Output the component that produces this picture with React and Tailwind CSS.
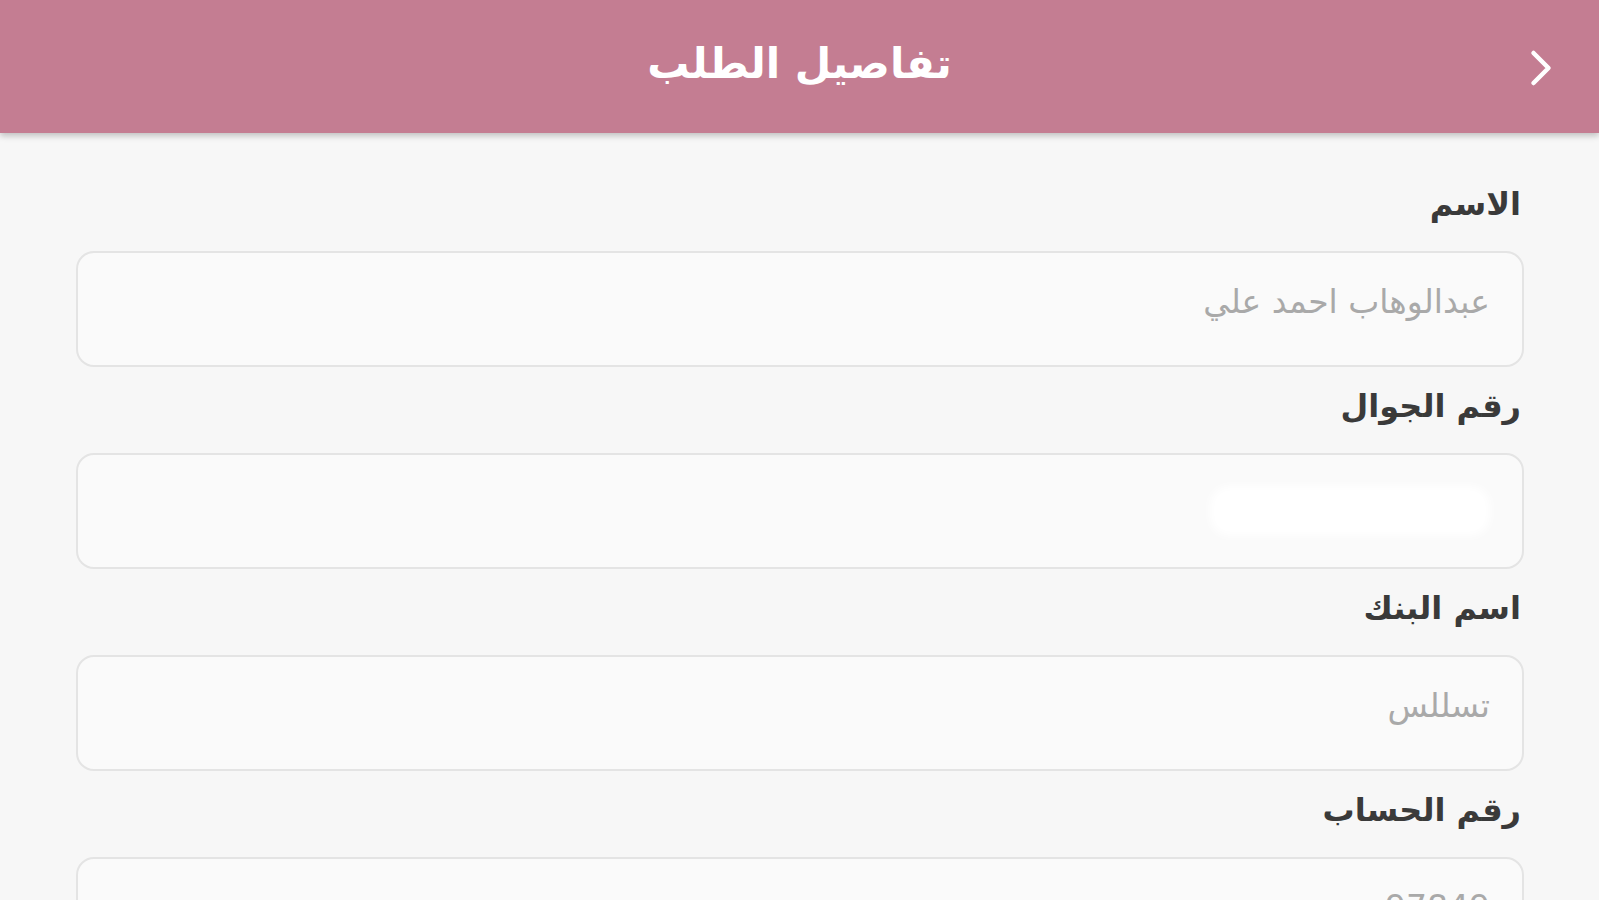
import { ChevronRight } from "lucide-react";

const fields = [
  { label: "الاسم", value: "عبدالوهاب احمد علي" },
  { label: "رقم الجوال", value: null },
  { label: "اسم البنك", value: "تسللس" },
  { label: "رقم الحساب", value: "97849" },
];

function Field({ label, value }) {
  return (
    <div>
      <p className="mt-[19px] mb-[27px] pr-[3px] text-[32px] leading-[40px] font-bold text-[#3a3a3a]">
        {label}
      </p>
      <div className="flex h-[116px] items-center rounded-[18px] border-2 border-[#e4e4e4] bg-[#fafafa] pr-[32px] pl-6 pb-[14px]">
        {value ? (
          <span className="text-[33px] text-[#a9a9a9]">{value}</span>
        ) : (
          <span className="mt-[14px] h-[50px] w-[280px] rounded-[20px] bg-white blur-[4px]" />
        )}
      </div>
    </div>
  );
}

export default function App() {
  return (
    <div
      dir="rtl"
      className="h-[900px] overflow-hidden bg-[#f7f7f7]"
      style={{ fontFamily: '"DejaVu Sans", "Noto Sans", sans-serif' }}
    >
      <header className="relative z-10 flex h-[133px] items-center justify-center bg-[#c47d92] pb-[6px] shadow-[0_3px_6px_rgba(0,0,0,0.22)]">
        <ChevronRight
          className="absolute right-[28px] top-[38px] text-white"
          size={60}
          strokeWidth={1.8}
        />
        <h1 className="text-[42px] font-bold text-white">تفاصيل الطلب</h1>
      </header>
      <main className="pr-[75px] pl-[76px] pt-[32px]">
        {fields.map((f) => (
          <Field key={f.label} {...f} />
        ))}
      </main>
    </div>
  );
}
